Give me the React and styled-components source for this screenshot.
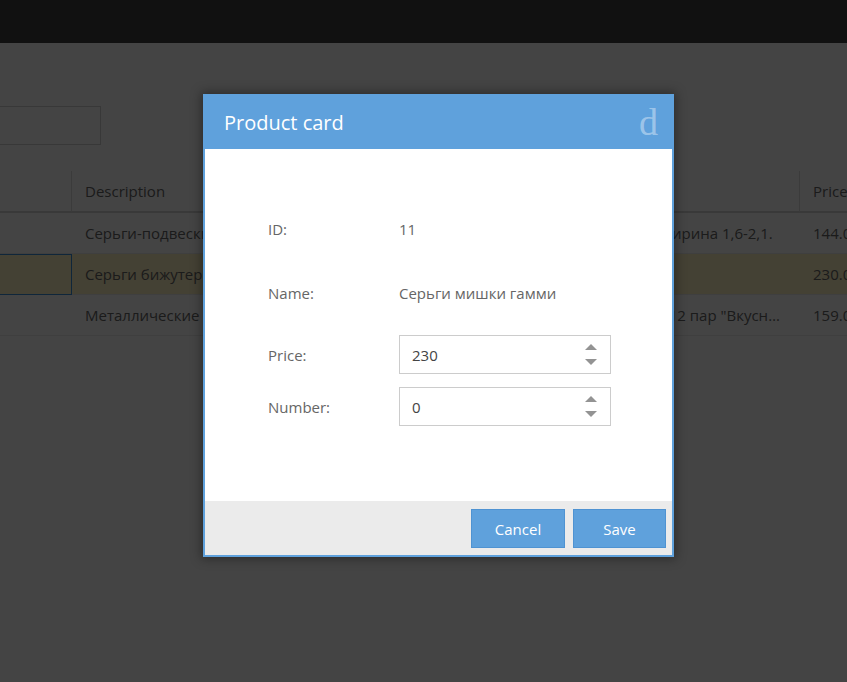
import React from "react";
import styled, { createGlobalStyle } from "styled-components";

const Global = createGlobalStyle`
  html, body { margin: 0; padding: 0; width: 100%; height: 100%; overflow: hidden; background: #fff; }
  body { font-family: "Open Sans", "Noto Sans", sans-serif; }
  #root { height: 100%; }
  * { box-sizing: border-box; }
`;

const Page = styled.div`
  position: relative;
  width: 847px;
  height: 682px;
  overflow: hidden;
  background: #fff;
`;

const TopBar = styled.div`
  height: 43px;
  background: #404040;
`;

const Content = styled.div`
  margin-left: -30px;
  padding-top: 63px;
`;

const Search = styled.div`
  width: 131px;
  height: 39px;
  border: 1px solid #d0d0d0;
`;

const Table = styled.div`
  margin-top: 26px;
  display: grid;
  grid-template-columns: 102px 728px 120px;
  font-size: 15px;
  color: #666;
`;

const HeadCell = styled.div`
  height: 42px;
  line-height: 40px;
  padding: 0 13px;
  border-right: 1px solid #dcdcdc;
  border-bottom: 2px solid #d6d6d6;
  white-space: nowrap;
  overflow: hidden;
`;

const Cell = styled.div`
  height: 41px;
  line-height: 40px;
  padding: 0 13px;
  border-bottom: 1px solid #ececec;
  background: ${(p) => (p.$selected ? "#fff2c2" : "#fff")};
  outline: ${(p) => (p.$focus ? "1px solid #3b8fd8" : "none")};
  outline-offset: -1px;
  white-space: nowrap;
  overflow: hidden;
  text-overflow: ellipsis;
`;

const Overlay = styled.div`
  position: absolute;
  inset: 0;
  background: rgba(0, 0, 0, 0.733);
`;

const Modal = styled.div`
  position: absolute;
  left: 203px;
  top: 94px;
  width: 471px;
  height: 463px;
  border: 2px solid #5fa1dc;
  background: #fff;
  display: flex;
  flex-direction: column;
  box-shadow: 0 0 10px 2px rgba(0, 0, 0, 0.35);
`;

const Header = styled.div`
  height: 53px;
  flex: none;
  background: #5fa1dc;
  display: flex;
  align-items: center;
  justify-content: space-between;
  padding-left: 19px;
  padding-right: 14px;
`;

const Title = styled.div`
  color: #fff;
  font-size: 20px;
  line-height: 24px;
`;

const Logo = styled.div`
  font-family: "Liberation Serif", "DejaVu Serif", serif;
  font-size: 38px;
  line-height: 38px;
  color: rgba(255, 255, 255, 0.4);
  margin-top: -2px;
`;

const Body = styled.div`
  flex: 1;
  padding: 60px 0 0 63px;
  display: flex;
  flex-direction: column;
`;

const Row = styled.div`
  display: flex;
  align-items: center;
  height: ${(p) => p.$h}px;
  margin-top: ${(p) => p.$top}px;
  font-size: 15px;
  color: #666;
`;

const Label = styled.div`
  width: 131px;
  flex: none;
`;

const Value = styled.div`
  color: #666;
`;

const NumberBox = styled.div`
  width: 212px;
  height: 39px;
  border: 1px solid #ccc;
  display: flex;
  align-items: center;
  justify-content: space-between;
  padding: 0 13px 0 12px;
  color: #444;
  font-size: 15px;
`;

const Spinner = styled.div`
  display: flex;
  flex-direction: column;
  gap: 9px;
`;

const Footer = styled.div`
  height: 54px;
  flex: none;
  background: #ebebeb;
  display: flex;
  justify-content: flex-end;
  align-items: flex-start;
  gap: 8px;
  padding: 8px 6px 0 0;
`;

const Button = styled.button`
  width: ${(p) => p.$w}px;
  height: 39px;
  background: #5fa1dc;
  border: 1px solid #4f93d2;
  color: #fff;
  font-family: "Open Sans", "Noto Sans", sans-serif;
  font-size: 15px;
  padding: 0;
  cursor: pointer;
`;

const Arrows = () => (
  <Spinner>
    <svg width="12" height="6" viewBox="0 0 12 6">
      <polygon points="6,0 12,6 0,6" fill="#939393" />
    </svg>
    <svg width="12" height="6" viewBox="0 0 12 6">
      <polygon points="0,0 12,0 6,6" fill="#939393" />
    </svg>
  </Spinner>
);

const rows = [
  {
    d: "Серьги-подвески из ювелирного сплава, золото, с кристаллами, длина 3,5 см, ширина 1,6-2,1.",
    p: "144.00",
  },
  { d: "Серьги бижутерия мишки гамми", p: "230.00", sel: true },
  {
    d: "Металлические серьги-гвоздики для девочек, из медицинской стали, набор на 12 пар \"Вкусняшки\" ассорти",
    p: "159.00",
  },
];

export default function App() {
  return (
    <Page>
      <Global />
      <TopBar />
      <Content>
        <Search />
        <Table>
          <HeadCell />
          <HeadCell>Description</HeadCell>
          <HeadCell>Price</HeadCell>
          {rows.map((r, i) => (
            <React.Fragment key={i}>
              <Cell $selected={r.sel} $focus={r.sel} />
              <Cell $selected={r.sel}>{r.d}</Cell>
              <Cell $selected={r.sel}>{r.p}</Cell>
            </React.Fragment>
          ))}
        </Table>
      </Content>
      <Overlay />
      <Modal>
        <Header>
          <Title>Product card</Title>
          <Logo>d</Logo>
        </Header>
        <Body>
          <Row $h={40} $top={0}>
            <Label>ID:</Label>
            <Value>11</Value>
          </Row>
          <Row $h={40} $top={24}>
            <Label>Name:</Label>
            <Value>Серьги мишки гамми</Value>
          </Row>
          <Row $h={39} $top={22}>
            <Label>Price:</Label>
            <NumberBox>
              <span>230</span>
              <Arrows />
            </NumberBox>
          </Row>
          <Row $h={39} $top={13}>
            <Label>Number:</Label>
            <NumberBox>
              <span>0</span>
              <Arrows />
            </NumberBox>
          </Row>
        </Body>
        <Footer>
          <Button $w={94}>Cancel</Button>
          <Button $w={93}>Save</Button>
        </Footer>
      </Modal>
    </Page>
  );
}
